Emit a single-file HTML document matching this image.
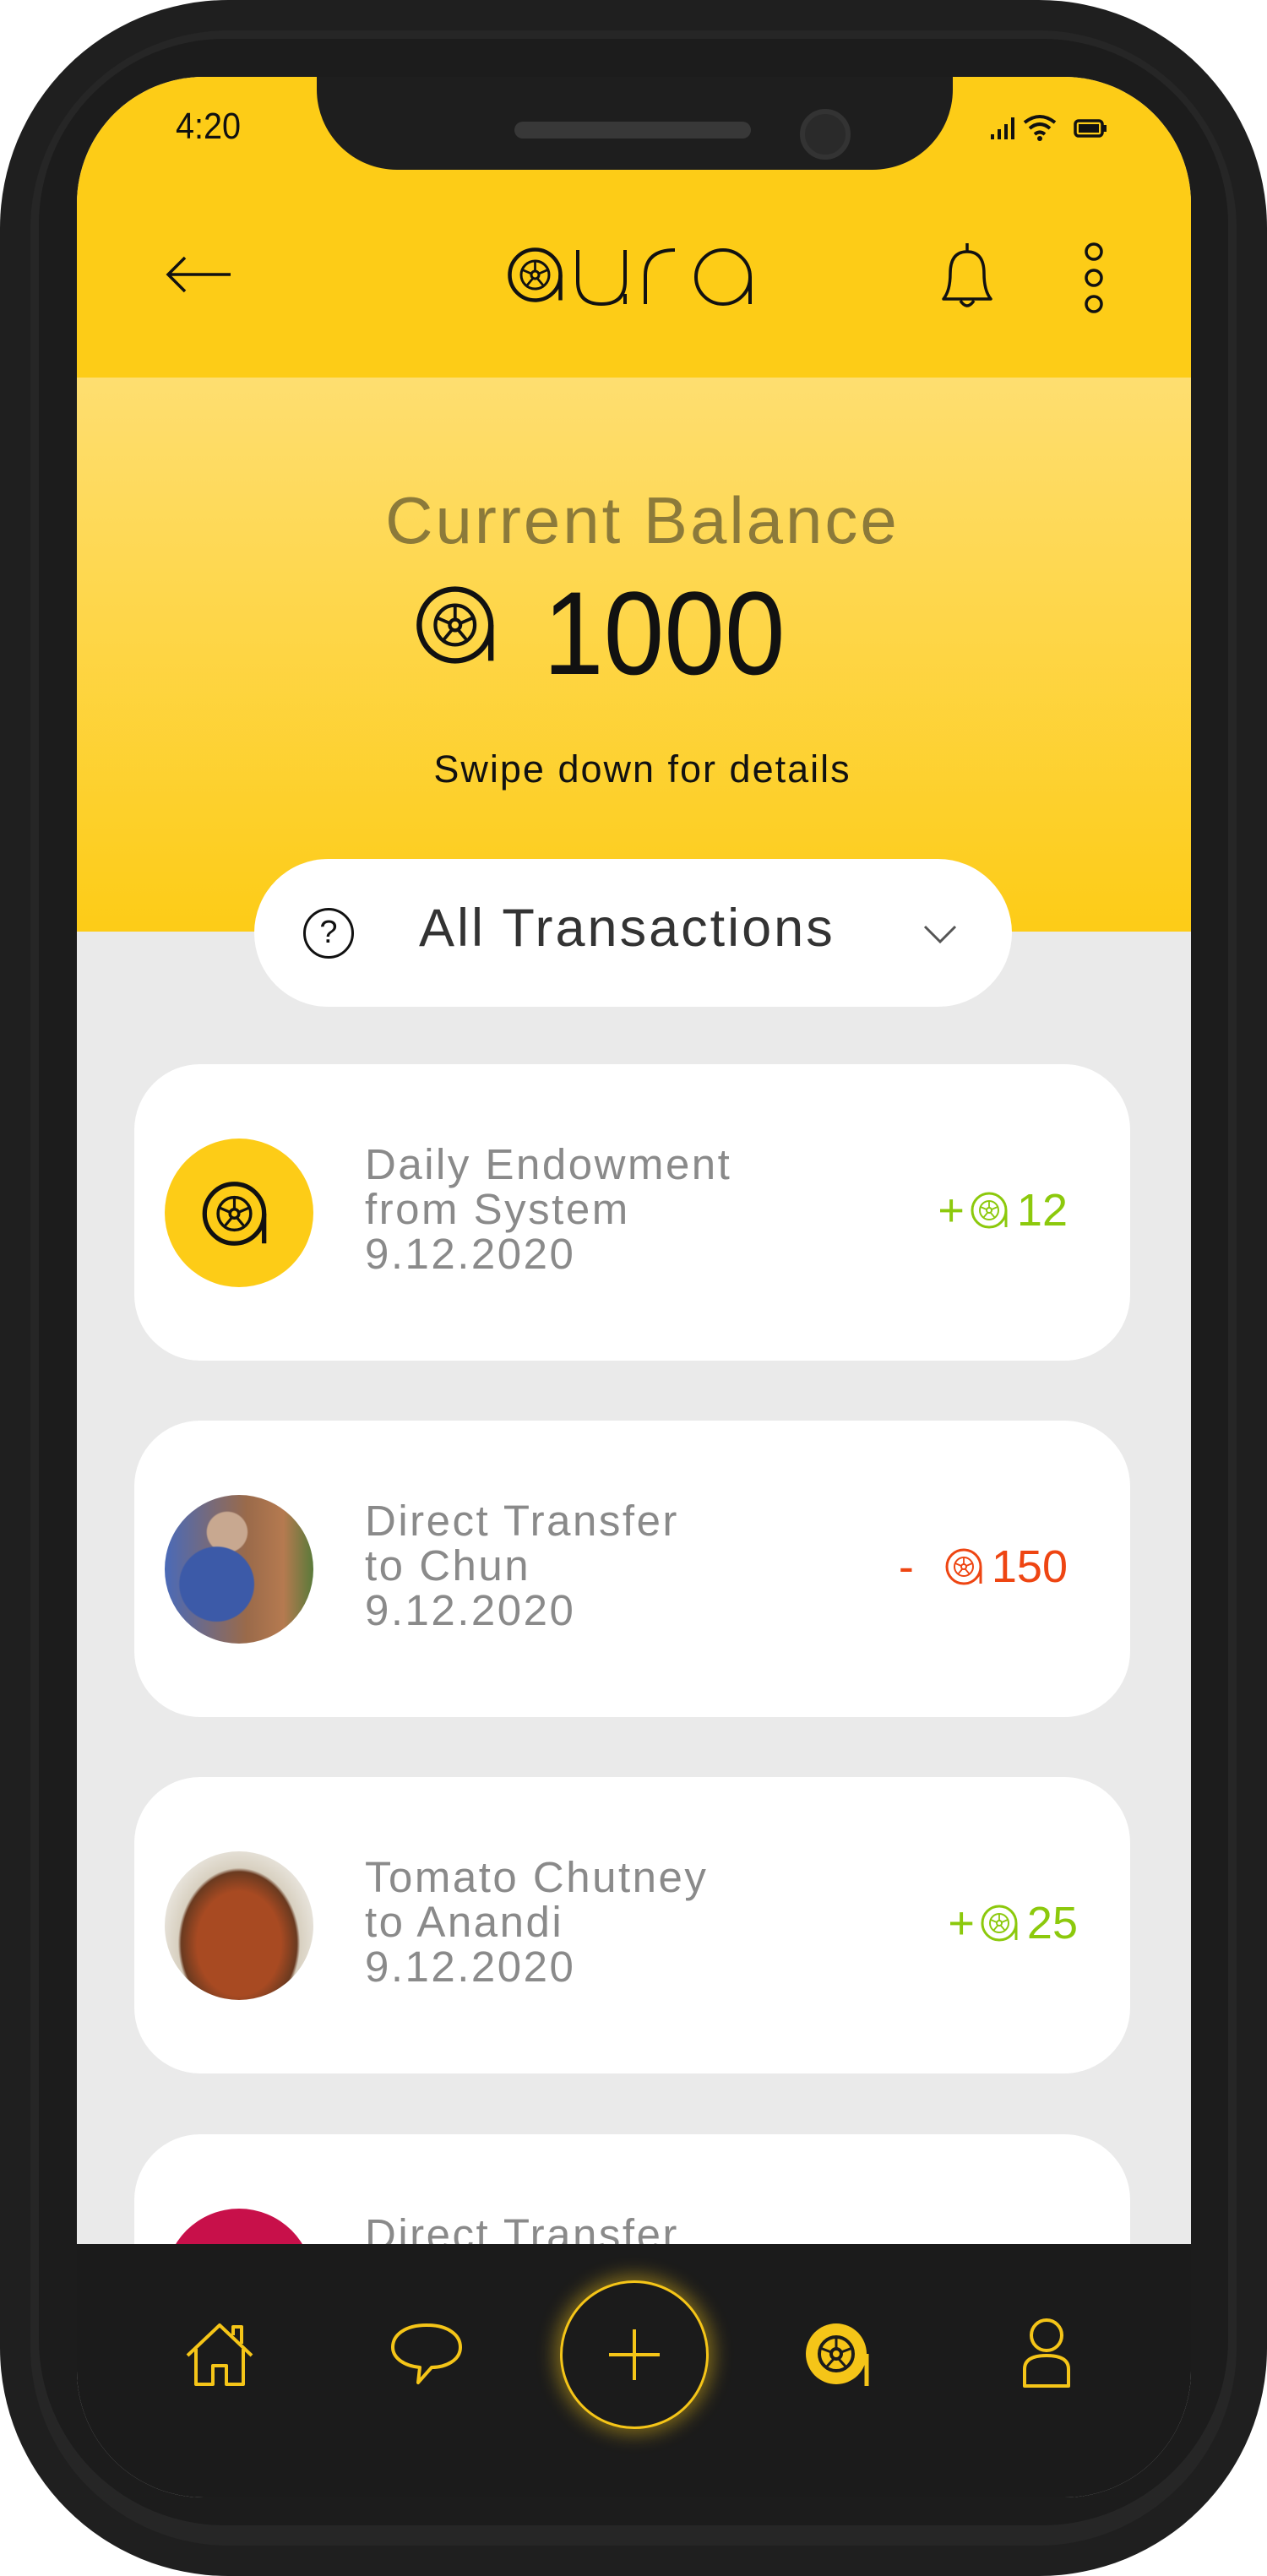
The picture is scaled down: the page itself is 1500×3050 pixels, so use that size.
<!DOCTYPE html>
<html><head><meta charset="utf-8">
<style>
*{margin:0;padding:0;box-sizing:border-box}
body{width:1500px;height:3050px;background:#fff;position:relative;overflow:hidden;font-family:"Liberation Sans",sans-serif}
.phone{position:absolute;left:0;top:0;width:1500px;height:3050px;background:#1f1f1f;border-radius:270px}
.rim{position:absolute;left:36px;top:36px;right:36px;bottom:36px;background:#262626;border-radius:235px}
.rim2{position:absolute;left:46px;top:46px;right:46px;bottom:60px;background:#1c1c1c;border-radius:220px}
.screen{position:absolute;left:91px;top:91px;width:1319px;height:2866px;border-radius:150px;overflow:hidden;background:#eaeaea}
.hdr{position:absolute;left:0;top:0;width:100%;height:356px;background:#fdcc17}
.band{position:absolute;left:0;top:356px;width:100%;height:656px;background:linear-gradient(#fede70,#fdcc17)}
.notch{position:absolute;left:284px;top:-10px;width:753px;height:120px;background:#1e1e1e;border-radius:0 0 95px 95px}
.abs{position:absolute}
.t{position:absolute;white-space:nowrap}
.card{position:absolute;left:68px;width:1179px;height:351px;background:#fff;border-radius:78px}
.av{position:absolute;left:36px;top:88px;width:176px;height:176px;border-radius:50%}
.ttl{position:absolute;left:273px;top:92px;color:#8a8a8a;font-size:51px;line-height:53px;letter-spacing:2.5px}
.amt{position:absolute;right:74px;top:145px;font-size:54px;line-height:56px;display:flex;align-items:center;gap:6px}
.nav{position:absolute;left:0;top:2566px;width:100%;height:300px;background:#1b1b1b}
</style></head><body>
<svg width="0" height="0" style="position:absolute">
<defs>
<symbol id="coin" viewBox="0 0 50 50">
<circle cx="23" cy="25" r="20" fill="none" stroke="currentColor" stroke-width="3"/>
<path d="M43 25 V45" stroke="currentColor" stroke-width="3" fill="none"/>
<circle cx="23" cy="25" r="11" fill="none" stroke="currentColor" stroke-width="2"/>
<circle cx="23" cy="25" r="3" fill="none" stroke="currentColor" stroke-width="2"/>
<path d="M23 22 V14 M26 24 L33 21 M25 28 L30 34 M21 28 L16 34 M20 24 L13 21" stroke="currentColor" stroke-width="1.8"/>
</symbol>
</defs></svg>
<div class="phone"></div>
<div class="rim"></div>
<div class="rim2"></div>
<div class="screen">
  <div class="hdr"></div>
  <div class="band"></div>
  <div class="notch"><div class="abs" style="left:234px;top:63px;width:280px;height:20px;background:#383838;border-radius:10px"></div><div class="abs" style="left:572px;top:48px;width:60px;height:60px;background:#2a2a2a;border-radius:50%;border:6px solid #333"></div></div>
  <div class="t" style="left:117px;top:34px;font-size:44px;color:#111;transform:scaleX(.9);transform-origin:left">4:20</div>
  <svg class="abs" style="left:1080px;top:40px" width="150" height="40" viewBox="0 0 150 40">
    <path d="M4 34V28 M12 34V22 M20 34V16 M28 34V8" stroke="#111" stroke-width="4"/>
    <path d="M42 14 Q60 0 78 14 M48 21 Q60 11 72 21 M54 28 Q60 23 66 28" stroke="#111" stroke-width="4" fill="none"/><circle cx="60" cy="33" r="3" fill="#111"/>
    <rect x="102" y="12" width="32" height="18" rx="4" fill="none" stroke="#111" stroke-width="3.5"/><rect x="106" y="16" width="24" height="10" fill="#111"/><rect x="135" y="17" width="4" height="8" fill="#111"/>
  </svg>
  <svg class="abs" style="left:104px;top:210px" width="80" height="50" viewBox="0 0 80 50"><path d="M78 24H4 M24 4 L4 24 L24 44" stroke="#111" stroke-width="3.5" fill="none"/></svg>
  <div class="abs" style="left:508px;top:197px;width:310px;height:75px;display:flex;align-items:flex-end">
    <svg width="75" height="75" style="color:#111"><use href="#coin"/></svg>
    <svg width="232" height="75" viewBox="0 0 232 75"><path d="M10 8 V45 Q10 72 38 72 Q66 72 66 45 V8 M66 60 V72 M90 72 V38 Q90 8 125 8 M150 40 A32 32 0 1 0 214 40 A32 32 0 1 0 150 40 M214 40 V72" stroke="#111" stroke-width="4" fill="none"/></svg>
  </div>
  <svg class="abs" style="left:1018px;top:193px" width="72" height="86" viewBox="0 0 72 86"><path d="M36 4 V14 M8 70 Q16 60 16 40 Q16 14 36 14 Q56 14 56 40 Q56 60 64 70 Z M28 72 Q36 84 44 72" stroke="#111" stroke-width="3.5" fill="none" stroke-linejoin="round"/></svg>
  <svg class="abs" style="left:1187px;top:195px" width="34" height="90" viewBox="0 0 34 90"><circle cx="17" cy="12" r="9" fill="none" stroke="#111" stroke-width="3.5"/><circle cx="17" cy="43" r="9" fill="none" stroke="#111" stroke-width="3.5"/><circle cx="17" cy="74" r="9" fill="none" stroke="#111" stroke-width="3.5"/></svg>

  <div class="t" style="left:0;width:100%;text-align:center;top:480px;font-size:78px;color:#8c7a3a;padding-left:20px;letter-spacing:3px">Current Balance</div>
  <div class="abs" style="left:399px;top:596px;width:106px;height:106px;color:#111"><svg width="106" height="106"><use href="#coin"/></svg></div>
  <div class="t" style="left:552px;top:578px;font-size:140px;color:#111;transform:scaleX(.92);transform-origin:left">1000</div>
  <div class="t" style="left:0;width:100%;text-align:center;top:794px;font-size:45px;color:#111;padding-left:20px;letter-spacing:2px">Swipe down for details</div>

  <div class="abs" style="left:210px;top:926px;width:897px;height:175px;background:#fff;border-radius:88px">
    <div class="abs" style="left:58px;top:58px;width:60px;height:60px;border:3.5px solid #111;border-radius:50%;text-align:center;font-size:38px;line-height:52px;color:#111">?</div>
    <div class="t" style="left:195px;top:46px;font-size:63px;color:#333;letter-spacing:3px">All Transactions</div>
    <svg class="abs" style="left:790px;top:76px" width="44" height="26" viewBox="0 0 44 26"><path d="M4 4 L22 22 L40 4" stroke="#555" stroke-width="3" fill="none"/></svg>
  </div>

  <div class="card" style="top:1169px">
    <div class="av" style="background:#fdcc17"><svg class="abs" style="left:42px;top:45px;color:#111" width="88" height="88"><use href="#coin"/></svg></div>
    <div class="ttl">Daily Endowment<br>from System<br>9.12.2020</div>
    <div class="amt" style="color:#8cc90c">+ <svg width="50" height="50"><use href="#coin"/></svg>12</div>
  </div>
  <div class="card" style="top:1591px">
    <div class="av" style="background:radial-gradient(circle at 35% 60%,#3c5aa8 0 28%,transparent 29%),radial-gradient(circle at 42% 25%,#c8a890 0 14%,transparent 15%),linear-gradient(90deg,#4a6ab8,#9a6a4a 55%,#b57a50 80%,#5a7a3a)"></div>
    <div class="ttl">Direct Transfer<br>to Chun<br>9.12.2020</div>
    <div class="amt" style="color:#ee4512">- &nbsp;<svg width="50" height="50"><use href="#coin"/></svg>150</div>
  </div>
  <div class="card" style="top:2013px">
    <div class="av" style="background:radial-gradient(ellipse at 50% 62%,#a84a22 0 40%,#6a3a20 55%,#d8d0c0 58%,#e8e4dc 75%,#7a4a30)"></div>
    <div class="ttl">Tomato Chutney<br>to Anandi<br>9.12.2020</div>
    <div class="amt" style="color:#8cc90c;right:62px">+ <svg width="50" height="50"><use href="#coin"/></svg>25</div>
  </div>
  <div class="card" style="top:2436px">
    <div class="av" style="background:#c8104a"></div>
    <div class="ttl">Direct Transfer<br>to</div>
  </div>

  <div class="nav">
    <svg class="abs" style="left:127px;top:90px" width="84" height="80" viewBox="0 0 84 80"><path d="M4 42 L42 6 L80 42 M14 34 V76 H34 V54 H50 V76 H70 V34 M58 18 V8 H68 V28" stroke="#f5c518" stroke-width="4" fill="none" stroke-linejoin="round"/></svg>
    <svg class="abs" style="left:370px;top:92px" width="88" height="78" viewBox="0 0 88 78"><path d="M44 4 C70 4 84 16 84 30 C84 46 66 54 50 54 L34 72 L36 54 C16 52 4 42 4 30 C4 16 18 4 44 4 Z" stroke="#f5c518" stroke-width="4" fill="none" stroke-linejoin="round"/></svg>
    <div class="abs" style="left:572px;top:43px;width:176px;height:176px;border-radius:50%;background:#1b1b1b;border:3px solid #f5c518;box-shadow:0 0 22px 6px rgba(245,197,24,.45)">
      <svg class="abs" style="left:53px;top:53px" width="64" height="64" viewBox="0 0 64 64"><path d="M32 2 V62 M2 32 H62" stroke="#f5c518" stroke-width="4"/></svg>
    </div>
    <div class="abs" style="left:861px;top:90px;width:84px;height:84px"><svg width="84" height="84" viewBox="0 0 84 84"><circle cx="38" cy="40" r="36" fill="#f5c518"/><path d="M74 40 V78" stroke="#f5c518" stroke-width="5"/><circle cx="38" cy="40" r="20" fill="none" stroke="#1b1b1b" stroke-width="4"/><circle cx="38" cy="40" r="6" fill="none" stroke="#1b1b1b" stroke-width="4"/><path d="M38 34 V20 M44 38 L57 33 M41 46 L50 56 M35 46 L26 56 M32 38 L19 33" stroke="#1b1b1b" stroke-width="3"/></svg></div>
    <svg class="abs" style="left:1118px;top:86px" width="60" height="86" viewBox="0 0 60 86"><circle cx="30" cy="22" r="18" fill="none" stroke="#f5c518" stroke-width="4"/><path d="M4 82 V62 Q4 46 30 46 Q56 46 56 62 V82 Z" fill="none" stroke="#f5c518" stroke-width="4" stroke-linejoin="round"/></svg>
  </div>
</div>
</body></html>
